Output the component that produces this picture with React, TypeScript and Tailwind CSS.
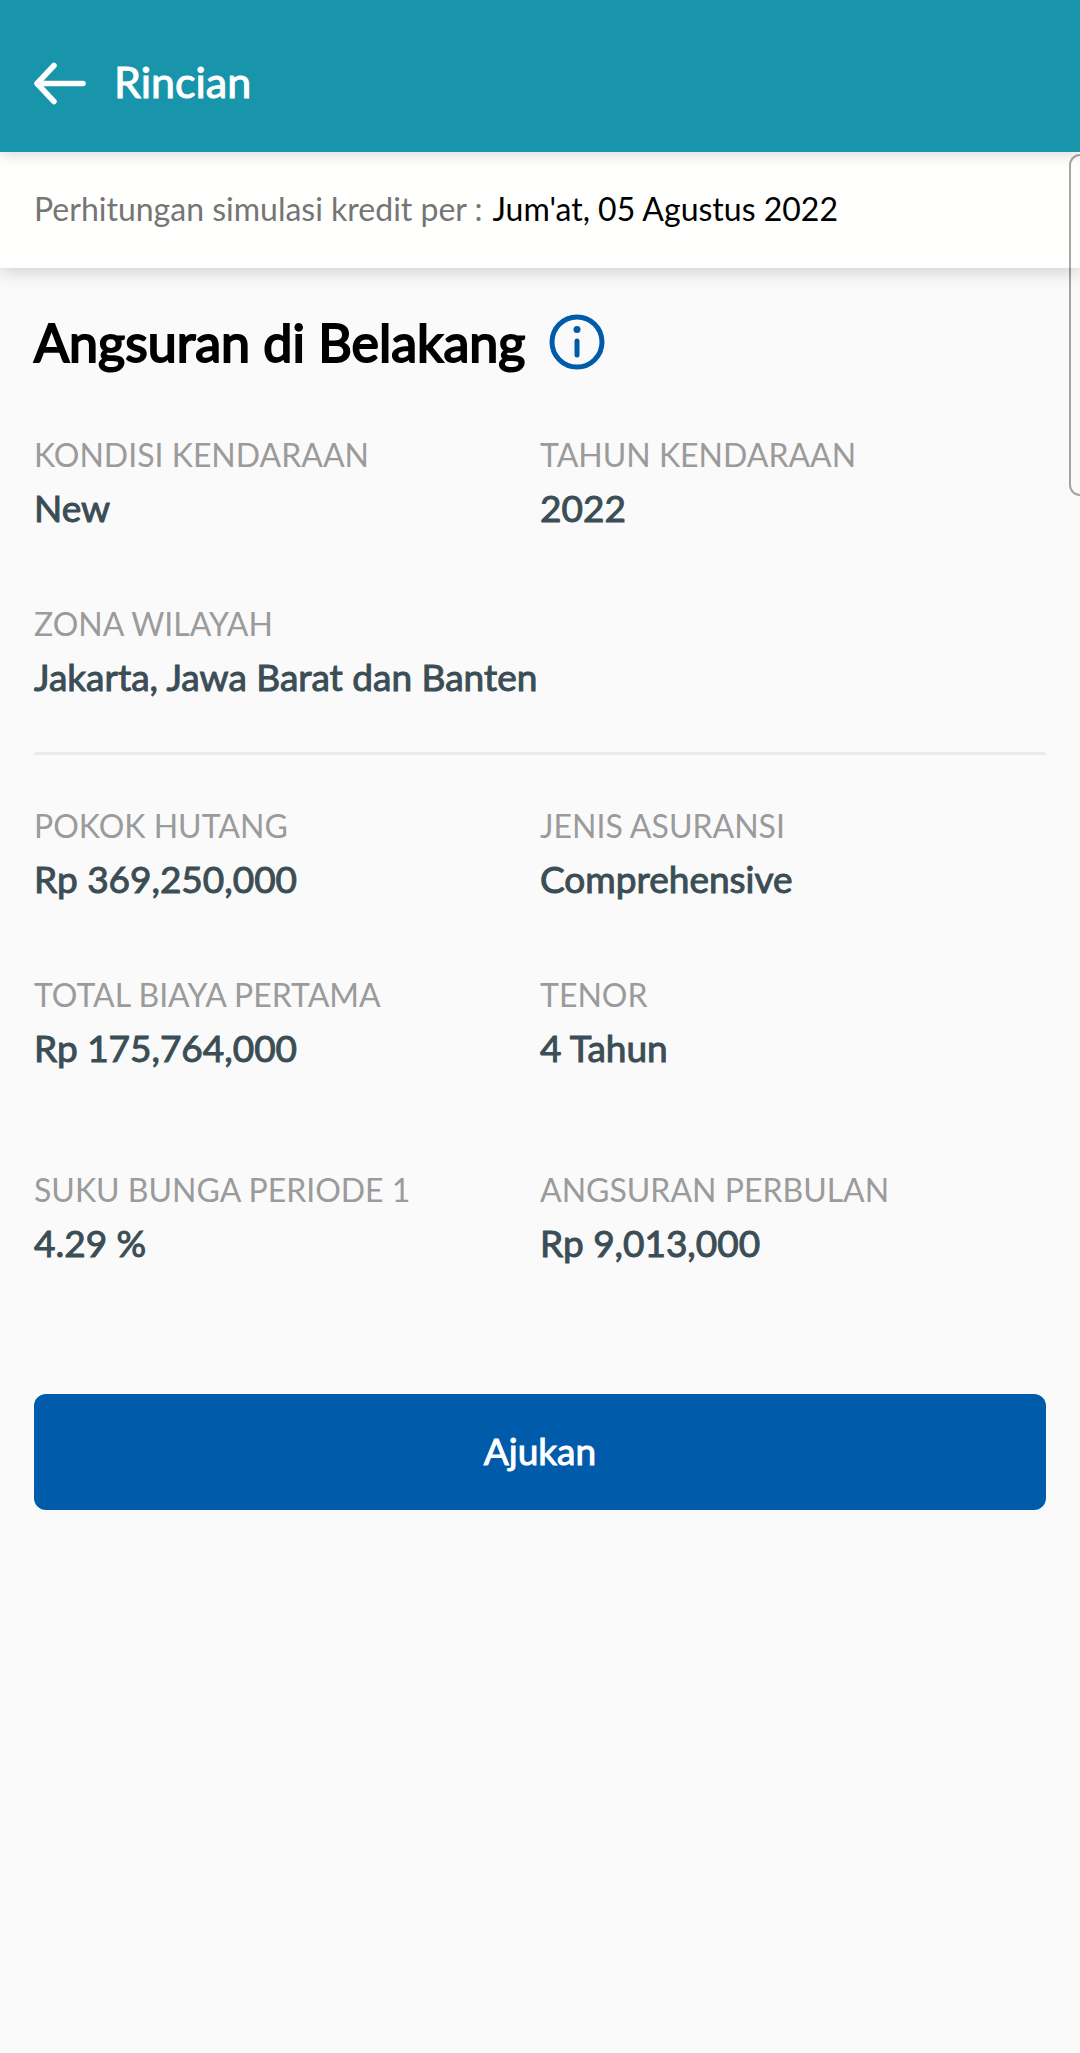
import type { ReactNode } from 'react';

function Field({ label, children, wide = false }: { label: string; children: ReactNode; wide?: boolean }) {
  return (
    <div className={wide ? 'col-span-2' : ''}>
      <dt className="text-[32px] leading-10 text-[#9b9b9b]">{label}</dt>
      <dd className="mt-2.5 text-[37px] leading-[46px] text-[#3b4d55] [-webkit-text-stroke:1px_#3b4d55]">{children}</dd>
    </div>
  );
}

export default function App() {
  return (
    <div className="relative min-h-screen overflow-hidden bg-[#fafafa] font-['Lato',sans-serif]">
      <header className="relative z-10 flex h-[152px] items-center gap-7 bg-[#1995ab] px-[34px] pt-4 text-white shadow-[0_2px_14px_rgba(0,0,0,0.16)]">
        <button type="button" aria-label="Kembali">
          <svg className="block h-11 w-[52px]" viewBox="0 0 52 44" fill="none" stroke="currentColor" strokeWidth="5.500" strokeLinecap="round" strokeLinejoin="round">
            <path d="M49 21.500H3M20 3.500 3 21.500 20 39.500" />
          </svg>
        </button>
        <h1 className="pb-1 text-[43px] leading-[52px] [-webkit-text-stroke:1px_white]">Rincian</h1>
      </header>
      <p className="flex h-[116px] items-center gap-2.5 bg-[#fffffd] px-[34px] pb-0.5 text-[32px] text-[#757575] shadow-[0_2px_18px_rgba(0,0,0,0.2)]">
        Perhitungan simulasi kredit per : <span className="text-black">Jum'at, 05 Agustus 2022</span>
      </p>
      <main className="px-[34px] pt-[39px]">
        <div className="flex items-center gap-6">
          <h2 className="text-[52px] leading-[70px] text-black [-webkit-text-stroke:2px_black]">Angsuran di Belakang</h2>
          <button type="button" aria-label="Informasi" className="text-[#005bab]">
            <svg className="block size-14" viewBox="0 0 56 56" fill="none" stroke="currentColor" strokeWidth="5" strokeLinecap="round">
              <circle cx="28" cy="28" r="25" />
              <circle cx="28" cy="15.500" r="3.500" fill="currentColor" stroke="none" />
              <path d="M28 27v14" />
            </svg>
          </button>
        </div>
        <dl className="mt-[58px] grid grid-cols-2 gap-y-[73px] border-b-3 border-[#ebebeb] pb-[52px]">
          <Field label="KONDISI KENDARAAN">New</Field>
          <Field label="TAHUN KENDARAAN">2022</Field>
          <Field label="ZONA WILAYAH" wide>Jakarta, Jawa Barat dan Banten</Field>
        </dl>
        <dl className="mt-[51px] grid grid-cols-2 gap-y-[73px]">
          <Field label="POKOK HUTANG">Rp 369,250,000</Field>
          <Field label="JENIS ASURANSI">Comprehensive</Field>
          <Field label="TOTAL BIAYA PERTAMA">Rp 175,764,000</Field>
          <Field label="TENOR">4 Tahun</Field>
        </dl>
        <dl className="mt-[99px] grid grid-cols-2">
          <Field label="SUKU BUNGA PERIODE 1">4.29 %</Field>
          <Field label="ANGSURAN PERBULAN">Rp 9,013,000</Field>
        </dl>
        <button type="button" className="mt-32 block h-[116px] w-full rounded-xl bg-[#005bab] pb-0.5 text-[37px] text-white [-webkit-text-stroke:1px_white]">Ajukan</button>
      </main>
      <aside aria-label="Panel samping" className="absolute top-[154px] right-0 z-20 h-[342px] w-[11px] rounded-l-[11px] border-2 border-r-0 border-black/35" />
    </div>
  );
}
